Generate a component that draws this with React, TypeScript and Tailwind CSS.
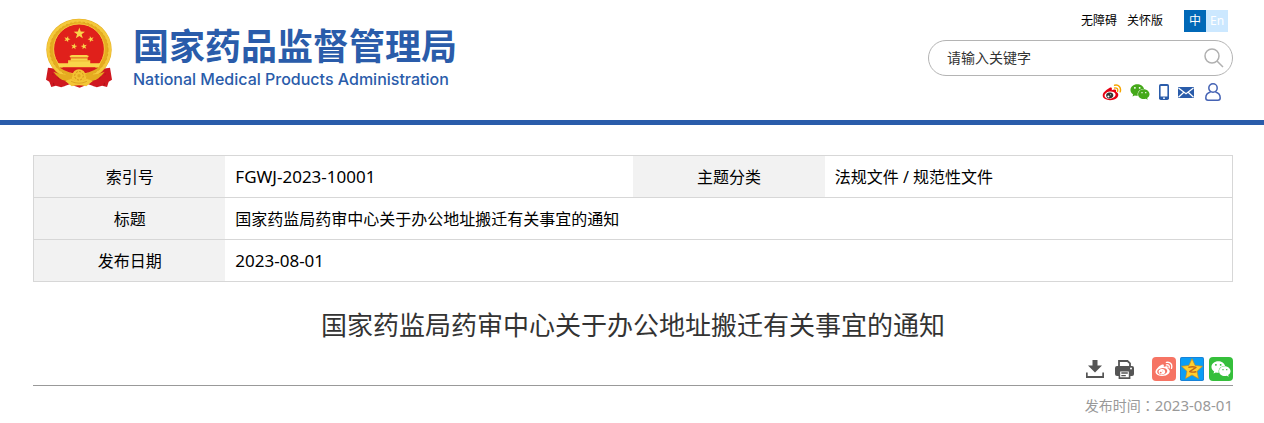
import React from "react";
import { FaWeixin } from "react-icons/fa";

const star = (cx: number, cy: number, r: number, turn = 0, inner = 0.4) =>
  Array.from({ length: 10 }, (_, i) => {
    const radius = i % 2 ? r * inner : r;
    const a = ((i * 36 - 90 + turn) * Math.PI) / 180;
    return `${(cx + radius * Math.cos(a)).toFixed(1)},${(cy + radius * Math.sin(a)).toFixed(1)}`;
  }).join(" ");

function Emblem() {
  return (
    <svg viewBox="18 22 200 210" className="h-[70px] w-[66px] shrink-0" role="img" aria-label="国徽">
      <path d="M24 172 L60 176 H178 L212 172 L218 208 L208 214 L203 230 L188 226 L172 231 L146 222 L120 232 L90 222 L64 231 L48 226 L34 230 L28 214 L18 208Z" fill="#cf1820" />
      <path d="M38 190 L42 226 M54 198 L60 226 M198 190 L194 226 M182 198 L176 226" stroke="#a31016" strokeWidth="2.5" fill="none" />
      <ellipse cx="118" cy="117" rx="99" ry="94" fill="#e5ac20" />
      <ellipse cx="118" cy="117" rx="93" ry="88" fill="none" stroke="#f4c93c" strokeWidth="9" />
      <ellipse cx="118" cy="117" rx="88" ry="84" fill="none" stroke="#d99a18" strokeWidth="2" strokeDasharray="7 6" />
      <ellipse cx="118" cy="115" rx="77" ry="76" fill="#e0201b" stroke="#f5cb3d" strokeWidth="3" />
      <g fill="#f9d54a">
        <polygon points={star(119, 68, 18)} />
        <polygon points={star(82, 85, 10, 18)} />
        <polygon points={star(154, 85, 10, -18)} />
        <polygon points={star(103, 107, 10, 10)} />
        <polygon points={star(133, 107, 10, -10)} />
        <path d="M89 136 L96 133 H141 L148 136 L145 141 H92Z M93 143 H144 V149 H152 V158 H183 L178 170 H58 L53 158 H85 V149 H93Z" />
      </g>
      <path d="M93 142 H144 M86 151 H151" stroke="#e0a01c" strokeWidth="1.5" />
      <path d="M60 172 H176 Q150 190 118 190 Q86 190 60 172Z" fill="#d41c1c" />
      <path d="M40 184 Q66 196 92 190 L98 204 L78 214 Q56 206 40 184Z M196 184 Q170 196 144 190 L138 204 L158 214 Q180 206 196 184Z" fill="#e5ac20" />
      <circle cx="118" cy="196" r="20" fill="#f2c232" />
      <circle cx="118" cy="196" r="13" fill="none" stroke="#d1901a" strokeWidth="3" strokeDasharray="6 4" />
      <circle cx="118" cy="196" r="5" fill="#e0a81f" />
      <path d="M26 178 Q50 212 82 212 L74 228 Q48 226 32 210Z M210 178 Q186 212 154 212 L162 228 Q188 226 204 210Z" fill="#cf1820" />
      <path d="M76 212 L94 205 Q118 220 142 205 L160 212 L140 228 Q118 222 96 228Z" fill="#f3c636" />
      <path d="M94 213 Q118 224 142 213" stroke="#d1901a" strokeWidth="2" fill="none" />
    </svg>
  );
}

function WeiboIcon({ body, arc, hollow, pupil, className }: { body: string; arc: string; hollow: string; pupil: string; className: string }) {
  return (
    <svg viewBox="0 0 60 52" className={className} aria-hidden="true">
      <path d="M22 12 C29 9 31 13 29 19 C37 15 45 16 42 24 C49 27 52 34 46 41 C38 50 20 52 9 46 C-1 41 0 31 7 24 C11 19 16 15 22 12Z" fill={body} />
      <ellipse cx="24" cy="34" rx="17" ry="11" transform="rotate(-8 24 34)" fill={hollow} />
      <ellipse cx="23" cy="35" rx="11" ry="9" transform="rotate(-14 23 35)" fill={pupil} />
      <circle cx="19" cy="38" r="3.2" fill={hollow} />
      <circle cx="26" cy="33" r="1.6" fill={hollow} />
      <path d="M38 4 C50 1 59 10 55 24 M38 12 C45 11 49 15 47 22" fill="none" stroke={arc} strokeWidth="4.5" strokeLinecap="round" />
    </svg>
  );
}

function SearchIcon() {
  return (
    <svg viewBox="0 0 20 20" className="h-5 w-5" fill="none" stroke="#b0b0b0" strokeWidth="1.5" aria-hidden="true">
      <circle cx="8" cy="8" r="7" />
      <path d="M13 13 L19 19" />
    </svg>
  );
}

function PhoneIcon() {
  return (
    <svg viewBox="0 0 10 16" className="h-4 w-[10px]" aria-hidden="true">
      <rect width="10" height="16" rx="1.8" fill="#2a5caa" />
      <rect x="1.6" y="2" width="6.8" height="10.5" fill="#fff" />
      <circle cx="5" cy="14.2" r="0.9" fill="#fff" />
    </svg>
  );
}

function MailIcon() {
  return (
    <svg viewBox="0 0 16 11" className="h-[11px] w-4" aria-hidden="true">
      <rect width="16" height="11" rx="0.6" fill="#2a5caa" />
      <path d="M0.5 1 L8 6.8 L15.5 1 M0.5 10.2 L5.8 5.2 M15.5 10.2 L10.2 5.2" fill="none" stroke="#fff" strokeWidth="1.2" />
    </svg>
  );
}

function UserIcon() {
  return (
    <svg viewBox="0 0 16 18" className="h-[18px] w-4" fill="none" stroke="#4563b4" strokeWidth="1.5" aria-hidden="true">
      <circle cx="8" cy="5" r="4.2" />
      <path d="M5.6 9 C2.4 9.8 0.8 12.2 0.8 15 Q0.8 17.2 3 17.2 H13 Q15.2 17.2 15.2 15 C15.2 12.2 13.6 9.8 10.4 9" />
    </svg>
  );
}

function DownloadIcon() {
  return (
    <svg viewBox="0 0 18 18" className="h-[18px] w-[18px]" aria-hidden="true">
      <path d="M6.5 0 H11.5 V5.5 H16 L9 12.5 L2 5.5 H6.5Z" fill="#555" />
      <path d="M0.8 12.5 V17 H17.2 V12.5" fill="none" stroke="#555" strokeWidth="1.8" />
    </svg>
  );
}

function PrintIcon() {
  return (
    <svg viewBox="0 0 19 19" className="h-[19px] w-[19px]" aria-hidden="true">
      <path d="M4 6 V1 H12.5 L15 3.4 V6" fill="#fff" stroke="#555" strokeWidth="1.8" />
      <rect y="6" width="19" height="10" rx="2" fill="#555" />
      <circle cx="16" cy="8.6" r="1" fill="#fff" />
      <path d="M4.4 10.8 H14.6 V18.1 H4.4Z" fill="#fff" stroke="#555" strokeWidth="1.6" />
      <path d="M6.3 13 H12.8 M6.3 15.6 H10.8" stroke="#555" strokeWidth="1.3" />
    </svg>
  );
}

function QzoneIcon() {
  return (
    <svg viewBox="0 0 72 72" className="h-6 w-6" aria-hidden="true">
      <rect width="72" height="72" rx="5" fill="#1783d8" />
      <rect x="3" y="3" width="66" height="66" rx="3" fill="#0a9df5" />
      <polygon points={star(36, 38, 33, 0, 0.48)} fill="#ffd02e" stroke="#d18a12" strokeWidth="2" strokeLinejoin="round" />
      <path d="M25 31 C32 29 42 29 48 31 L29 44 C36 46 43 46 49 44" fill="none" stroke="#c0661a" strokeWidth="4" strokeLinejoin="round" />
    </svg>
  );
}

const headCell = "border-y border-[#d7d7d7] bg-[#f2f2f2] text-center font-normal";
const dataCell = "border-y border-[#d7d7d7] px-[10px]";
const codeCell = "border-y border-[#d7d7d7] px-[10px] text-[17px]";

export default function App() {
  return (
    <div className="bg-white font-['Noto_Sans','Noto_Sans_CJK_SC',sans-serif] text-black">
      <header className="border-b-[5px] border-[#2a5caa]">
        <div className="flex h-[120px] items-start justify-between pr-[31px] pl-[46px]">
          <a href="#home" className="flex gap-[21px] pt-[18px] text-[#2a5caa]">
            <Emblem />
            <span className="flex flex-col pt-[3px] whitespace-nowrap">
              <span className="font-['Noto_Sans_CJK_SC',sans-serif] text-4xl leading-[46px] font-bold">国家药品监督管理局</span>
              <span className="font-['Inter',sans-serif] text-base leading-6 font-medium">National Medical Products Administration</span>
            </span>
          </a>
          <div className="flex w-[305px] shrink-0 flex-col pt-[10px]">
            <nav className="flex h-[22px] items-center justify-end pr-[5px] text-xs">
              <a href="#accessible" className="mr-[10px]">无障碍</a>
              <a href="#care" className="mr-[21px]">关怀版</a>
              <a href="#zh" className="flex h-[22px] w-[22px] items-center justify-center bg-[#0068b7] text-white">中</a>
              <a href="#en" className="flex h-[22px] w-[22px] items-center justify-center bg-[#cce8ff] text-white">En</a>
            </nav>
            <form className="mt-2 flex h-9 items-center rounded-full border border-[#b4b4b4] pr-2 pl-[18px]" onSubmit={(e) => e.preventDefault()}>
              <input aria-label="请输入关键字" placeholder="请输入关键字" className="min-w-0 flex-1 bg-transparent text-sm outline-none placeholder:text-[#333]" />
              <button type="submit" aria-label="搜索"><SearchIcon /></button>
            </form>
            <div className="mt-[6px] flex h-5 items-center justify-end pr-3">
              <a href="#weibo" aria-label="微博" className="mr-2"><WeiboIcon body="#e60012" arc="#f5a500" hollow="#fff" pupil="#333" className="h-[17px] w-5" /></a>
              <a href="#wechat" aria-label="微信" className="mr-[9px]"><FaWeixin className="h-5 w-5 text-[#45a91a]" /></a>
              <a href="#mobile" aria-label="手机版" className="mr-[9px]"><PhoneIcon /></a>
              <a href="#mail" aria-label="邮箱" className="mr-[11px]"><MailIcon /></a>
              <a href="#user" aria-label="个人中心"><UserIcon /></a>
            </div>
          </div>
        </div>
      </header>

      <main className="pt-[30px] pr-[31px] pl-[33px]">
        <table className="w-full table-fixed border-collapse border border-[#d7d7d7] text-base">
          <colgroup>
            <col className="w-[16%]" />
            <col className="w-[34%]" />
            <col className="w-[16%]" />
            <col className="w-[34%]" />
          </colgroup>
          <tbody>
            <tr className="h-[42px]">
              <th scope="row" className={headCell}>索引号</th>
              <td className={codeCell}>FGWJ-2023-10001</td>
              <th scope="row" className={headCell}>主题分类</th>
              <td className={dataCell}>法规文件 / 规范性文件</td>
            </tr>
            <tr className="h-[42px]">
              <th scope="row" className={headCell}>标题</th>
              <td colSpan={3} className={dataCell}>国家药监局药审中心关于办公地址搬迁有关事宜的通知</td>
            </tr>
            <tr className="h-[42px]">
              <th scope="row" className={headCell}>发布日期</th>
              <td colSpan={3} className={codeCell}>2023-08-01</td>
            </tr>
          </tbody>
        </table>

        <h1 className="mt-6 text-center text-[26px] leading-[38px] text-[#333]">国家药监局药审中心关于办公地址搬迁有关事宜的通知</h1>

        <div className="mt-[13px] flex items-center justify-end border-b border-[#999] pb-1">
          <button type="button" aria-label="下载" className="mr-[11px]"><DownloadIcon /></button>
          <button type="button" aria-label="打印" className="mr-[18px]"><PrintIcon /></button>
          <a href="#share-weibo" aria-label="分享到微博" className="mr-1 flex h-6 w-6 items-center justify-center rounded-sm bg-[#f67464]">
            <WeiboIcon body="#fff" arc="#fff" hollow="#f67464" pupil="#fff" className="h-4 w-[18px]" />
          </a>
          <a href="#share-qzone" aria-label="分享到QQ空间" className="mr-[5px]"><QzoneIcon /></a>
          <a href="#share-wechat" aria-label="分享到微信" className="flex h-6 w-6 items-center justify-center rounded-sm bg-[#35bf3b]">
            <FaWeixin className="h-5 w-5 text-white" />
          </a>
        </div>
        <p className="pt-2 pb-2 text-right text-sm leading-[22px] text-[#999]">
          发布时间<span className="font-['Noto_Sans_CJK_TC',sans-serif]" lang="zh-TW">：</span>
          <time dateTime="2023-08-01" className="text-[15px]">2023-08-01</time>
        </p>
      </main>
    </div>
  );
}
